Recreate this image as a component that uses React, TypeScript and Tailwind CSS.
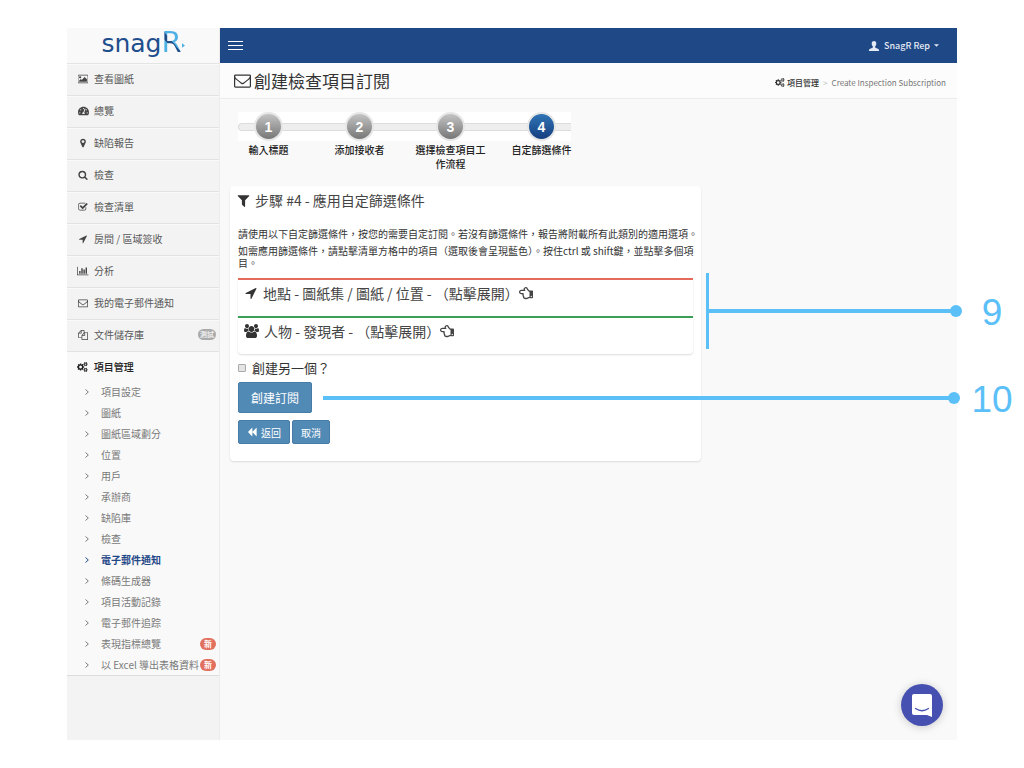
import React from "react";
import { FaRegHandPointLeft, FaTachometerAlt } from "react-icons/fa";

const icons = {
  picture: {
    width: 1920,
    d: "M576 576q0 80-56 136t-136 56-136-56-56-136 56-136 136-56 136 56 56 136zm1024 384v448h-1408v-192l320-320 160 160 512-512zm96-704h-1600q-13 0-22.5 9.5t-9.5 22.5v1216q0 13 9.5 22.5t22.5 9.5h1600q13 0 22.5-9.5t9.5-22.5v-1216q0-13-9.5-22.5t-22.5-9.5zm160 32v1216q0 66-47 113t-113 47h-1600q-66 0-113-47t-47-113v-1216q0-66 47-113t113-47h1600q66 0 113 47t47 113z",
  },
  marker: {
    width: 1792,
    d: "M1152 640q0-106-75-181t-181-75-181 75-75 181 75 181 181 75 181-75 75-181zm256 0q0 109-33 179l-364 774q-16 33-47.5 52t-67.5 19-67.5-19-46.5-52l-365-774q-33-70-33-179 0-212 150-362t362-150 362 150 150 362z",
  },
  search: {
    width: 1792,
    d: "M1216 832q0-185-131.5-316.5t-316.5-131.5-316.5 131.5-131.5 316.5 131.5 316.5 316.5 131.5 316.5-131.5 131.5-316.5zm512 832q0 52-38 90t-90 38q-54 0-90-38l-343-342q-179 124-399 124-143 0-273.5-55.5t-225-150-150-225-55.5-273.5 55.5-273.5 150-225 225-150 273.5-55.5 273.5 55.5 225 150 150 225 55.5 273.5q0 220-124 399l343 343q37 37 37 90z",
  },
  check: {
    width: 1792,
    d: "M1472 930v318q0 119-84.5 203.5t-203.5 84.5h-832q-119 0-203.5-84.5t-84.5-203.5v-832q0-119 84.5-203.5t203.5-84.5h832q63 0 117 25 15 7 18 23 3 17-9 29l-49 49q-10 10-23 10-3 0-9-2-23-6-45-6h-832q-66 0-113 47t-47 113v832q0 66 47 113t113 47h832q66 0 113-47t47-113v-254q0-13 9-22l64-64q10-10 23-10 6 0 12 3 20 8 20 29zm231-489l-814 814q-24 24-57 24t-57-24l-430-430q-24-24-24-57t24-57l110-110q24-24 57-24t57 24l263 263 647-647q24-24 57-24t57 24l110 110q24 24 24 57t-24 57z",
  },
  arrow: {
    width: 1792,
    d: "M1593 349l-640 1280q-17 35-57 35-5 0-15-2-22-5-35.5-22.5t-13.5-39.5v-576h-576q-22 0-39.5-13.5t-22.5-35.5 4-42 29-30l1280-640q13-7 29-7 27 0 45 19 15 14 18.5 34.5t-6.5 39.5z",
  },
  chart: {
    width: 2048,
    d: "M640 896v512h-256v-512h256zm384-512v1024h-256v-1024h256zm1024 1152v128h-2048v-1536h128v1408h1920zm-640-896v768h-256v-768h256zm384-384v1152h-256v-1152h256z",
  },
  envelope: {
    width: 1792,
    d: "M1664 1504v-768q-32 36-69 66-268 206-426 338-51 43-83 67t-86.5 48.5-102.5 24.5h-2q-48 0-102.5-24.5t-86.5-48.5-83-67q-158-132-426-338-37-30-69-66v768q0 13 9.5 22.5t22.5 9.5h1472q13 0 22.5-9.5t9.5-22.5zm0-1051v-24.5l-.5-13-3-12.5-5.5-9-9-7.5-14-2.5h-1472q-13 0-22.5 9.5t-9.5 22.5q0 168 147 284 193 152 401 317 6 5 35 29.5t46 37.5 44.5 31.5 50.5 27.5 43 9h2q20 0 43-9t50.5-27.5 44.5-31.5 46-37.5 35-29.5q208-165 401-317 54-43 100.5-115.5t46.5-131.5zm128-37v1088q0 66-47 113t-113 47h-1472q-66 0-113-47t-47-113v-1088q0-66 47-113t113-47h1472q66 0 113 47t47 113z",
  },
  files: {
    width: 1792,
    d: "M1696 384q40 0 68 28t28 68v1216q0 40-28 68t-68 28h-960q-40 0-68-28t-28-68v-288h-544q-40 0-68-28t-28-68v-672q0-40 20-88t48-76l408-408q28-28 76-48t88-20h416q40 0 68 28t28 68v328q68-40 128-40h416zm-544 213l-299 299h299v-299zm-640-384l-299 299h299v-299zm196 647l316-316v-416h-384v416q0 40-28 68t-68 28h-416v640h512v-256q0-40 20-88t48-76zm956 804v-1152h-384v416q0 40-28 68t-68 28h-416v640h896z",
  },
  cogs: {
    width: 1920,
    d: "M896 896q0-106-75-181t-181-75-181 75-75 181 75 181 181 75 181-75 75-181zm768 512q0-52-38-90t-90-38-90 38-38 90q0 53 37.5 90.5t90.5 37.5 90.5-37.5 37.5-90.5zm0-1024q0-52-38-90t-90-38-90 38-38 90q0 53 37.5 90.5t90.5 37.5 90.5-37.5 37.5-90.5zm-384 421v185q0 10-7 19.5t-16 10.5l-155 24q-11 35-32 76 34 48 90 115 7 11 7 20 0 12-7 19-23 30-82.5 89.5t-78.5 59.5q-11 0-21-7l-115-90q-37 19-77 31-11 108-23 155-7 24-30 24h-186q-11 0-20-7.5t-10-17.5l-23-153q-34-10-75-31l-118 89q-7 7-20 7-11 0-21-8-144-133-144-160 0-9 7-19 10-14 41-53t47-61q-23-44-35-82l-152-24q-10-1-17-9.5t-7-19.5v-185q0-10 7-19.5t16-10.5l155-24q11-35 32-76-34-48-90-115-7-11-7-20 0-12 7-20 22-30 82-89t79-59q11 0 21 7l115 90q34-18 77-32 11-108 23-154 7-24 30-24h186q11 0 20 7.5t10 17.5l23 153q34 10 75 31l118-89q8-7 20-7 11 0 21 8 144 133 144 160 0 8-7 19-12 16-42 54t-45 60q23 48 34 82l152 23q10 2 17 10.5t7 19.5zm640 533v140q0 16-149 31-12 27-30 52 51 113 51 138 0 4-4 7-122 71-124 71-8 0-46-47t-52-68q-20 2-30 2t-30-2q-14 21-52 68t-46 47q-2 0-124-71-4-3-4-7 0-25 51-138-18-25-30-52-149-15-149-31v-140q0-16 149-31 13-29 30-52-51-113-51-138 0-4 4-7 4-2 35-20t59-34 30-16q8 0 46 46.5t52 67.5q20-2 30-2t30 2q51-71 92-112l6-2q4 0 124 70 4 3 4 7 0 25-51 138 17 23 30 52 149 15 149 31zm0-1024v140q0 16-149 31-12 27-30 52 51 113 51 138 0 4-4 7-122 71-124 71-8 0-46-47t-52-68q-20 2-30 2t-30-2q-14 21-52 68t-46 47q-2 0-124-71-4-3-4-7 0-25 51-138-18-25-30-52-149-15-149-31v-140q0-16 149-31 13-29 30-52-51-113-51-138 0-4 4-7 4-2 35-20t59-34 30-16q8 0 46 46.5t52 67.5q20-2 30-2t30 2q51-71 92-112l6-2q4 0 124 70 4 3 4 7 0 25-51 138 17 23 30 52 149 15 149 31z",
  },
  filter: {
    width: 1792,
    d: "M1595 295q17 41-14 70l-493 493v742q0 42-39 59-13 5-25 5-27 0-45-19l-256-256q-19-19-19-45v-486l-493-493q-31-29-14-70 17-39 59-39h1280q42 0 59 39z",
  },
  users: {
    width: 1920,
    d: "M593 896q-162 5-265 128h-134q-82 0-138-40.5t-56-118.5q0-353 124-353 6 0 43.5 21t97.5 42.5 119 21.5q67 0 133-23-5 37-5 66 0 139 81 256zm1071 637q0 120-73 189.5t-194 69.5h-874q-121 0-194-69.5t-73-189.5q0-53 3.5-103.5t14-109 26.5-108.5 43-97.5 62-81 85.5-53.5 111.5-20q10 0 43 21.5t73 48 107 48 135 21.5 135-21.5 107-48 73-48 43-21.5q61 0 111.5 20t85.5 53.5 62 81 43 97.5 26.5 108.5 14 109 3.5 103.5zm-1024-1277q0 106-75 181t-181 75-181-75-75-181 75-181 181-75 181 75 75 181zm704 384q0 159-112.5 271.5t-271.5 112.5-271.5-112.5-112.5-271.5 112.5-271.5 271.5-112.5 271.5 112.5 112.5 271.5zm576 225q0 78-56 118.5t-138 40.5h-134q-103-123-265-128 81-117 81-256 0-29-5-66 66 23 133 23 59 0 119-21.5t97.5-42.5 43.5-21q124 0 124 353zm-128-609q0 106-75 181t-181 75-181-75-75-181 75-181 181-75 181 75 75 181z",
  },
  backward: {
    width: 1792,
    d: "M1683 141q19-19 32-13t13 32v1472q0 26-13 32t-32-13l-710-710q-9-9-13-19v710q0 26-13 32t-32-13l-710-710q-19-19-19-45t19-45l710-710q19-19 32-13t13 32v710q4-10 13-19z",
  },
};

type IconName = keyof typeof icons;

const Icon = ({ name, className }: { name: IconName; className?: string }) => (
  <svg viewBox={`0 0 ${icons[name].width} 1792`} fill="currentColor" className={className} aria-hidden="true">
    <path d={icons[name].d} />
  </svg>
);

const menuItems: { label: string; icon: IconName | "dashboard"; badge?: string }[] = [
  { label: "查看圖紙", icon: "picture" },
  { label: "總覽", icon: "dashboard" },
  { label: "缺陷報告", icon: "marker" },
  { label: "檢查", icon: "search" },
  { label: "檢查清單", icon: "check" },
  { label: "房間 / 區域簽收", icon: "arrow" },
  { label: "分析", icon: "chart" },
  { label: "我的電子郵件通知", icon: "envelope" },
  { label: "文件儲存庫", icon: "files", badge: "測試" },
];

const subItems: { label: string; active?: boolean; badge?: string }[] = [
  { label: "項目設定" },
  { label: "圖紙" },
  { label: "圖紙區域劃分" },
  { label: "位置" },
  { label: "用戶" },
  { label: "承辦商" },
  { label: "缺陷庫" },
  { label: "檢查" },
  { label: "電子郵件通知", active: true },
  { label: "條碼生成器" },
  { label: "項目活動記錄" },
  { label: "電子郵件追踪" },
  { label: "表現指標總覽", badge: "新" },
  { label: "以 Excel 導出表格資料", badge: "新" },
];

const steps = ["輸入標題", "添加接收者", "選擇檢查項目工作流程", "自定篩選條件"];

const Logo = () => (
  <a href="#" className="flex h-9 items-baseline justify-center border-b border-[#e4e4e4] bg-[#f9f9f9] font-['DejaVu_Sans',sans-serif] leading-7">
    <span className="text-[25px] text-[#1f4e8c]">snag</span>
    <span className="bg-[linear-gradient(50deg,#4fb0e3_38%,#1f4e8c_39%,#1f4e8c_52%,#4fb0e3_53%)] bg-clip-text text-[29px] text-transparent">R</span>
    <svg viewBox="0 0 4 6" className="h-[5px] w-[3px] self-center" fill="#4fb0e3" aria-hidden="true">
      <path d="M0 0l4 3-4 3z" />
    </svg>
  </a>
);

const Sidebar = () => (
  <aside className="w-[153px] shrink-0 border-r border-[#ececec] bg-[#f3f3f3]">
    <Logo />
    <nav>
      <ul>
        {menuItems.map((item) => (
          <li key={item.label} className="border-b border-[#e2e2e2] shadow-[inset_0_1px_0_#fafafa]">
            <a href="#" className="flex h-[31px] items-center pr-[3px] pb-[2px] pl-[10px] text-[10px] text-[#595959]">
              <span className="mr-[5px] flex w-3 justify-center text-[#444]">
                {item.icon === "dashboard" ? (
                  <FaTachometerAlt className="h-[10px] w-[11px]" />
                ) : (
                  <Icon name={item.icon} className="h-[10px]" />
                )}
              </span>
              {item.label}
              {item.badge && (
                <span className="ml-auto rounded-full bg-[#aaa] px-[2px] text-[7px] leading-[11px] font-bold text-[#eee]">{item.badge}</span>
              )}
            </a>
          </li>
        ))}
        <li className="border-b border-[#dcdcdc] bg-[#f9f9f9]">
          <a href="#" className="flex h-[29px] items-center pl-[10px] text-[10px] font-medium text-[#222]">
            <Icon name="cogs" className="mr-[6px] h-[10px]" />
            項目管理
          </a>
          <ul>
            {subItems.map((item) => (
              <li key={item.label}>
                <a
                  href="#"
                  className={`flex h-[21px] items-center pr-[3px] pl-[18px] text-[10px] whitespace-nowrap ${item.active ? "font-bold text-[#1f4887]" : "text-[#7a7a7a]"}`}
                >
                  <svg viewBox="0 0 4 6" className="mr-3 h-[6px] w-1 shrink-0" fill="none" stroke="currentColor" aria-hidden="true">
                    <path d="M0.500 0.500L3.300 3 0.500 5.500" />
                  </svg>
                  {item.label}
                  {item.badge && (
                    <span className="ml-auto rounded-full bg-[#e2705f] px-1 text-[8px] leading-3 font-bold text-white">{item.badge}</span>
                  )}
                </a>
              </li>
            ))}
          </ul>
        </li>
      </ul>
    </nav>
  </aside>
);

const TopBar = () => (
  <header className="flex h-[35px] items-center justify-between bg-[#1f4887] pr-[18px] pl-2 text-white">
    <button type="button" aria-label="Menu" className="flex w-[15px] flex-col gap-[3px]">
      <span className="h-px w-full bg-white" />
      <span className="h-px w-full bg-white" />
      <span className="h-px w-full bg-white" />
    </button>
    <button type="button" className="flex items-center text-[9px] font-medium text-[#e4eaf3]">
      <svg viewBox="0 0 20 20" className="mr-[5px] h-[10px] w-[10px]" fill="currentColor" aria-hidden="true">
        <path d="M10 0c3 0 4.600 2.200 4.600 5.200 0 2.400-1.100 4.700-2.400 5.800v2.200l6.300 2.800c1 .5 1.500 1.200 1.500 2.200V20H0v-1.800c0-1 .5-1.700 1.500-2.200l6.300-2.800V11C6.500 9.900 5.400 7.600 5.400 5.200 5.400 2.200 7 0 10 0z" />
      </svg>
      SnagR Rep
      <svg viewBox="0 0 6 3" className="ml-1 h-[3px] w-[5px]" fill="currentColor" aria-hidden="true">
        <path d="M0 0h6L3 3z" />
      </svg>
    </button>
  </header>
);

const PageTitle = () => (
  <div className="flex h-9 items-center justify-between border-b border-[#ececec] bg-[#fcfcfc] pr-[11px] pl-[14px]">
    <h1 className="flex items-center text-[17px] text-[#333]">
      <Icon name="envelope" className="mr-[3px] h-[17px]" />
      創建檢查項目訂閱
    </h1>
    <ol className="flex items-center pt-1 text-[8px]">
      <li>
        <a href="#" className="flex items-center font-medium text-[#333]">
          <Icon name="cogs" className="mr-[2px] h-[9px]" />
          項目管理
        </a>
      </li>
      <li className="px-1 text-[#bbb]">&gt;</li>
      <li className="text-[#777]">Create Inspection Subscription</li>
    </ol>
  </div>
);

const Wizard = () => (
  <div className="relative mt-[13px] flex h-[74px] pl-[3px]">
    <div className="absolute top-0 left-[18px] flex h-[29px] w-[333px] items-center bg-white">
      <div className="h-2 w-full rounded-l-full border border-r-0 border-[#dcdcdc] bg-[#eee]" />
    </div>
    {steps.map((step, i) => (
      <div key={step} className="relative flex w-[91px] flex-col items-center px-[10px]">
        <div
          className={`flex h-[29px] w-[29px] shrink-0 items-center justify-center rounded-full border-2 border-[#e6e6e6] font-['Liberation_Sans',sans-serif] text-sm font-bold text-white ${i === 3 ? "bg-linear-to-b from-[#2f74b5] to-[#173f80]" : "bg-linear-to-b from-[#c4c4c4] to-[#777]"}`}
        >
          {i + 1}
        </div>
        <div className="mt-[2px] text-center text-[10px] leading-[14px] font-medium text-[#222]">{step}</div>
      </div>
    ))}
  </div>
);

const Filter = ({ icon, label, className }: { icon: IconName; label: string; className: string }) => (
  <div className={`h-[38px] border-t-2 ${className}`}>
    <button type="button" className="flex items-center pl-[6px] text-sm leading-[26px] whitespace-pre text-[#444]">
      <Icon name={icon} className="mr-[5px] h-[14px] text-[#333]" />
      {label}
      <FaRegHandPointLeft className="h-[14px] w-[14px]" />
    </button>
  </div>
);

const SubscriptionForm = () => (
  <section className="ml-[10px] w-full max-w-[471px] rounded-sm bg-white px-2 pb-[17px] shadow-[0_1px_2px_rgba(0,0,0,0.12)]">
    <h2 className="flex h-[30px] items-center pb-[2px] text-sm text-[#444]">
      <Icon name="filter" className="mr-1 -ml-[2px] h-[15px] text-[#333]" />
      步驟 #4 - 應用自定篩選條件
    </h2>
    <div className="mt-3 text-[10px] leading-3 whitespace-nowrap text-[#333]">
      <p>請使用以下自定篩選條件，按您的需要自定訂閱。若沒有篩選條件，報告將附載所有此類別的適用選項。</p>
      <p className="mt-[5px]">
        如需應用篩選條件，請點擊清單方格中的項目（選取後會呈現藍色）。按住ctrl 或 shift鍵，並點擊多個項
        <br />
        目。
      </p>
    </div>
    <div className="mt-[9px] rounded-sm shadow-[0_1px_2px_rgba(0,0,0,0.14)]">
      <Filter icon="arrow" label="地點 - 圖紙集 / 圖紙 / 位置 - （點擊展開）" className="border-[#e66a5c]" />
      <Filter icon="users" label="人物 - 發現者 - （點擊展開）" className="border-[#3a9e57]" />
    </div>
    <label className="flex h-[27px] items-center text-[13px] text-[#333]">
      <input type="checkbox" className="mr-[6px] h-2 w-2 appearance-none rounded-[1px] border border-[#aaa] bg-[#e4e4e4]" />
      創建另一個？
    </label>
    <button type="submit" className="mt-px flex h-[31px] items-center rounded-[2px] border border-[#477ba8] bg-[#528ab6] px-3 text-xs text-white">
      創建訂閱
    </button>
    <div className="mt-[7px] flex gap-[2px] text-[10px] text-white">
      <button type="button" className="flex h-6 items-center rounded-[2px] border border-[#477ba8] bg-[#528ab6] px-2">
        <Icon name="backward" className="mr-1 h-[10px]" />
        返回
      </button>
      <button type="button" className="flex h-6 items-center rounded-[2px] border border-[#477ba8] bg-[#528ab6] px-2">
        取消
      </button>
    </div>
  </section>
);

const ChatButton = () => (
  <button
    type="button"
    aria-label="Chat"
    className="absolute right-[14px] bottom-[14px] flex h-[42px] w-[42px] items-center justify-center rounded-full bg-[#4650b0] shadow-[0_1px_8px_rgba(0,0,0,0.2)]"
  >
    <svg viewBox="0 0 20 23" className="h-[23px] w-5" aria-hidden="true">
      <path d="M2 0h16q2 0 2 2v21l-5-2H2q-2 0-2-2V2q0-2 2-2z" fill="#fff" />
      <path d="M3.500 14.500q6.500 4.500 13 0" fill="none" stroke="#4650b0" strokeWidth="1.300" strokeLinecap="round" />
    </svg>
  </button>
);

// Numbered guide markers drawn over the screen
const Callouts = () => (
  <div className="font-['Liberation_Sans',sans-serif] text-[37px] leading-[38px] text-[#5bc0f8]">
    <div className="absolute top-[273px] right-[62px] left-[706px] flex h-[76px] items-center">
      <span className="h-full w-[3px] bg-[#5bc0f8]" />
      <span className="h-1 flex-1 bg-[#5bc0f8]" />
      <span className="-ml-1 h-3 w-3 rounded-full bg-[#5bc0f8]" />
    </div>
    <div className="absolute top-[294px] right-0 w-16 text-center">9</div>
    <div className="absolute top-[392px] right-16 left-[323px] flex items-center">
      <span className="h-1 flex-1 bg-[#5bc0f8]" />
      <span className="-ml-1 h-3 w-3 rounded-full bg-[#5bc0f8]" />
    </div>
    <div className="absolute top-[381px] right-0 w-16 text-center">10</div>
  </div>
);

export default function App() {
  return (
    <div lang="zh-Hant" className="relative flex min-h-screen bg-white px-[67px] py-7 font-['Noto_Sans_CJK_TC',sans-serif]">
      <div className="relative flex flex-1 bg-[#f9f9f9]">
        <Sidebar />
        <main className="min-w-0 flex-1">
          <TopBar />
          <PageTitle />
          <Wizard />
          <SubscriptionForm />
        </main>
        <ChatButton />
      </div>
      <Callouts />
    </div>
  );
}
